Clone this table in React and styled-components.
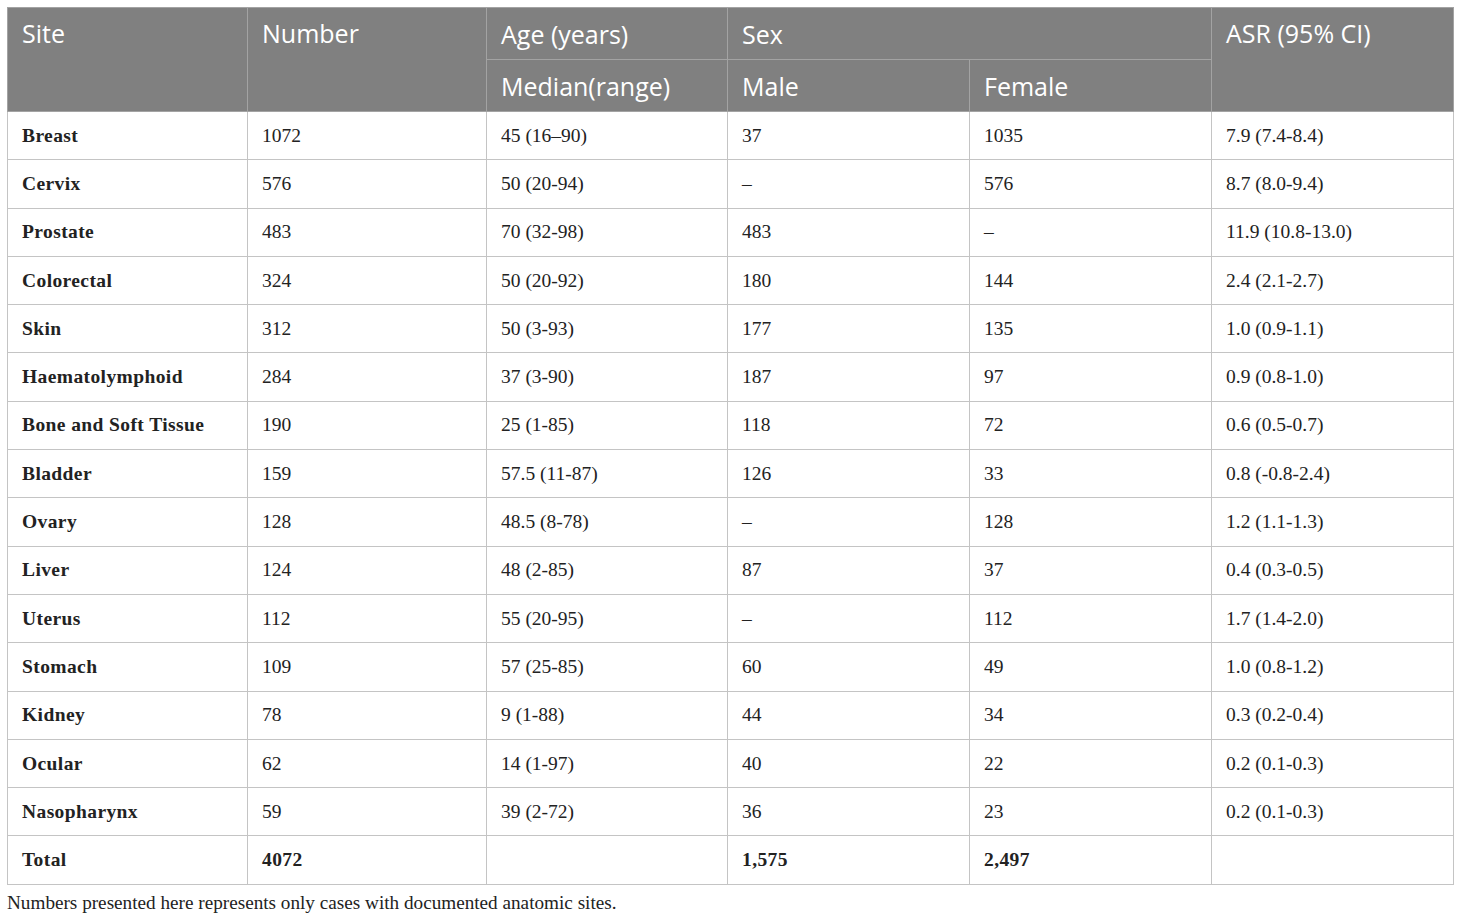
import React from 'react';
import styled, { createGlobalStyle } from 'styled-components';

const GlobalStyle = createGlobalStyle`
	html, body {
		margin: 0;
		padding: 0;
		background: #ffffff;
	}
`

const Page = styled.div`
	padding: 7px 7px 0 7px;
	width: 1446px;
`

const Table = styled.table`
	width: 1446px;
	border-collapse: collapse;
	table-layout: fixed;
	border: 1px solid #c4c4c4;
`

const HeadCell = styled.th`
	background: #808080;
	color: #ffffff;
	font-family: "Open Sans", "Noto Sans", sans-serif;
	font-weight: 400;
	font-size: 25px;
	text-align: left;
	vertical-align: ${props => props.top ? 'top' : 'middle'};
	height: ${props => props.top ? 'auto' : '51px'};
	padding: ${props => props.top ? '8px 14px 0 14px' : '0 14px'};
	border: 1px solid #a3a3a3;
	line-height: 34px;
`

const Row = styled.tr`
	height: 48.3px;
`

const Cell = styled.td`
	font-family: "Liberation Serif", "Times New Roman", serif;
	font-size: 19.5px;
	font-weight: ${props => props.bold ? 700 : 400};
	letter-spacing: ${props => props.bold ? '0.4px' : '0'};
	color: #222222;
	padding: 0 14px;
	border: 1px solid #c4c4c4;
	vertical-align: middle;
	white-space: nowrap;
`

const Footnote = styled.div`
	font-family: "Liberation Serif", "Times New Roman", serif;
	font-size: 19.2px;
	color: #222222;
	margin-top: 7px;
`

const rows = [
	['Breast', '1072', '45 (16–90)', '37', '1035', '7.9 (7.4-8.4)'],
	['Cervix', '576', '50 (20-94)', '–', '576', '8.7 (8.0-9.4)'],
	['Prostate', '483', '70 (32-98)', '483', '–', '11.9 (10.8-13.0)'],
	['Colorectal', '324', '50 (20-92)', '180', '144', '2.4 (2.1-2.7)'],
	['Skin', '312', '50 (3-93)', '177', '135', '1.0 (0.9-1.1)'],
	['Haematolymphoid', '284', '37 (3-90)', '187', '97', '0.9 (0.8-1.0)'],
	['Bone and Soft Tissue', '190', '25 (1-85)', '118', '72', '0.6 (0.5-0.7)'],
	['Bladder', '159', '57.5 (11-87)', '126', '33', '0.8 (-0.8-2.4)'],
	['Ovary', '128', '48.5 (8-78)', '–', '128', '1.2 (1.1-1.3)'],
	['Liver', '124', '48 (2-85)', '87', '37', '0.4 (0.3-0.5)'],
	['Uterus', '112', '55 (20-95)', '–', '112', '1.7 (1.4-2.0)'],
	['Stomach', '109', '57 (25-85)', '60', '49', '1.0 (0.8-1.2)'],
	['Kidney', '78', '9 (1-88)', '44', '34', '0.3 (0.2-0.4)'],
	['Ocular', '62', '14 (1-97)', '40', '22', '0.2 (0.1-0.3)'],
	['Nasopharynx', '59', '39 (2-72)', '36', '23', '0.2 (0.1-0.3)'],
];

const App = () => {
	return (
		<Page>
			<GlobalStyle />
			<Table>
				<colgroup>
					<col style={{ width: '240px' }} />
					<col style={{ width: '239px' }} />
					<col style={{ width: '241px' }} />
					<col style={{ width: '242px' }} />
					<col style={{ width: '242px' }} />
					<col style={{ width: '242px' }} />
				</colgroup>
				<thead>
					<tr>
						<HeadCell top rowSpan={2}>Site</HeadCell>
						<HeadCell top rowSpan={2}>Number</HeadCell>
						<HeadCell>Age (years)</HeadCell>
						<HeadCell colSpan={2}>Sex</HeadCell>
						<HeadCell top rowSpan={2}>ASR (95% CI)</HeadCell>
					</tr>
					<tr>
						<HeadCell>Median(range)</HeadCell>
						<HeadCell>Male</HeadCell>
						<HeadCell>Female</HeadCell>
					</tr>
				</thead>
				<tbody>
					{rows.map(row => (
						<Row key={row[0]}>
							{row.map((value, i) => (
								<Cell key={i} bold={i === 0}>{value}</Cell>
							))}
						</Row>
					))}
					<Row>
						<Cell bold>Total</Cell>
						<Cell bold>4072</Cell>
						<Cell></Cell>
						<Cell bold>1,575</Cell>
						<Cell bold>2,497</Cell>
						<Cell></Cell>
					</Row>
				</tbody>
			</Table>
			<Footnote>Numbers presented here represents only cases with documented anatomic sites.</Footnote>
		</Page>
	);
}

export default App;
